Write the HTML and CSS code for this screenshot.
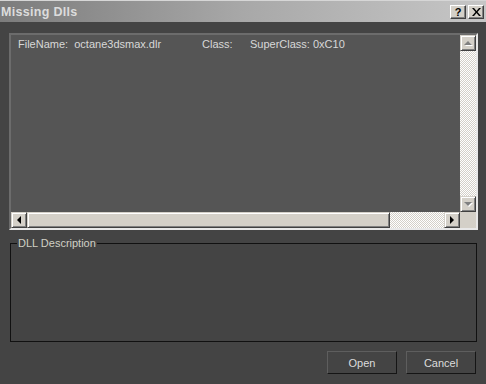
FILE: index.html
```html
<!DOCTYPE html>
<html>

<head>
    <meta charset="UTF-8">
    <title>Missing Dlls</title>
    <link rel="stylesheet" href="styles.css">
</head>

<body>
    <div class="dialog">
        <div class="titlebar">
            <span class="title">Missing Dlls</span>
            <div class="title-buttons">
                <button class="tbtn">?</button>
                <button class="tbtn close">
                    <svg width="9" height="8" viewBox="0 0 9 8">
                        <path d="M0 0h2l2.5 3 2.5-3h2l-3.5 4 3.5 4h-2l-2.5-3-2.5 3h-2l3.5-4z" fill="#000"/>
                    </svg>
                </button>
            </div>
        </div>

        <div class="content">
            <div class="listbox">
                <div class="list-items">
                    <div class="list-row">
                        <span class="col-file">FileName:&nbsp; octane3dsmax.dlr</span>
                        <span class="col-class">Class:</span>
                        <span class="col-super">SuperClass: 0xC10</span>
                    </div>
                </div>
                <div class="vscroll">
                    <div class="sbtn"><span class="arrow up"></span></div>
                    <div class="track"></div>
                    <div class="sbtn"><span class="arrow down"></span></div>
                </div>
                <div class="hscroll">
                    <div class="sbtn"><span class="arrow left"></span></div>
                    <div class="thumb"></div>
                    <div class="track"></div>
                    <div class="sbtn"><span class="arrow right"></span></div>
                </div>
                <div class="corner"></div>
            </div>

            <fieldset class="group">
                <legend>DLL Description</legend>
            </fieldset>

            <div class="button-row">
                <button class="btn">Open</button>
                <button class="btn">Cancel</button>
            </div>
        </div>
    </div>
</body>

</html>
```

FILE: styles.css
```css
body {
    margin: 0;
    padding: 0;
    background-color: #444444;
    font-family: "Liberation Sans", "DejaVu Sans", sans-serif;
    font-size: 11px;
}

.dialog {
    width: 486px;
    height: 384px;
    display: flex;
    flex-direction: column;
    background-color: #444444;
}

.titlebar {
    height: 22px;
    flex: none;
    display: flex;
    align-items: center;
    justify-content: space-between;
    background: linear-gradient(to right, #7c7c7c, #a8a8a8 50%, #c6c6c6);
    border-top: 1px solid #d6d6d6;
    box-sizing: border-box;
}

.title {
    font-family: "Liberation Sans", sans-serif;
    font-weight: bold;
    font-size: 12.5px;
    color: #dcdcdc;
    padding-left: 1px;
    letter-spacing: 0.3px;
}

.title-buttons {
    display: flex;
    gap: 2px;
    padding-right: 2px;
}

.tbtn {
    width: 16px;
    height: 14px;
    padding: 0;
    margin: 0;
    background-color: #d4d0c8;
    border: 1px solid;
    border-color: #ffffff #404040 #404040 #ffffff;
    box-shadow: inset -1px -1px 0 #808080;
    font-family: "Liberation Sans", sans-serif;
    font-weight: bold;
    font-size: 11px;
    line-height: 12px;
    color: #000;
    display: flex;
    align-items: center;
    justify-content: center;
}

.content {
    flex: 1;
    display: flex;
    flex-direction: column;
    padding: 11px 8px 0 9px;
}

.listbox {
    height: 197px;
    box-sizing: border-box;
    border: 2px solid;
    border-color: #6c6c6c #e8e8e8 #e8e8e8 #6c6c6c;
    background-color: #555555;
    display: grid;
    grid-template-columns: 1fr 16px;
    grid-template-rows: 1fr 16px;
}

.list-items {
    padding: 3px 0 0 7px;
    color: #d8d8d8;
}

.list-row {
    display: flex;
    white-space: nowrap;
}

.col-file {
    width: 184px;
}

.col-class {
    width: 48px;
}

.sbtn {
    width: 16px;
    height: 16px;
    box-sizing: border-box;
    background-color: #d4d0c8;
    border: 1px solid;
    border-color: #d4d0c8 #404040 #404040 #d4d0c8;
    box-shadow: inset 1px 1px 0 #ffffff, inset -1px -1px 0 #808080;
    display: flex;
    align-items: center;
    justify-content: center;
    flex: none;
}

.arrow {
    width: 0;
    height: 0;
    border: 4px solid transparent;
}

.arrow.up {
    border-top: 0;
    border-bottom-color: #808080;
    filter: drop-shadow(1px 1px 0 #ffffff);
}

.arrow.down {
    border-bottom: 0;
    border-top-color: #808080;
    filter: drop-shadow(1px 1px 0 #ffffff);
}

.arrow.left {
    border-left: 0;
    border-right-color: #000;
}

.arrow.right {
    border-right: 0;
    border-left-color: #000;
}

.track {
    flex: 1;
    background-color: #d4d0c8;
    background-image: repeating-conic-gradient(#ffffff 0 25%, #d4d0c8 0 50%);
    background-size: 2px 2px;
}

.vscroll {
    display: flex;
    flex-direction: column;
}

.hscroll {
    display: flex;
}

.thumb {
    width: 363px;
    box-sizing: border-box;
    background-color: #d4d0c8;
    border: 1px solid;
    border-color: #d4d0c8 #404040 #404040 #d4d0c8;
    box-shadow: inset 1px 1px 0 #ffffff, inset -1px -1px 0 #808080;
}

.corner {
    background-color: #d4d0c8;
}

.group {
    margin: 6px 1px 0 1px;
    padding: 0;
    height: 106px;
    box-sizing: border-box;
    border: 1px solid #111111;
    min-inline-size: 0;
}

.group legend {
    margin-left: 6px;
    padding: 0 1px;
    color: #d0d0c4;
    font-size: 11px;
    line-height: 15px;
}

.button-row {
    display: flex;
    justify-content: flex-end;
    gap: 9px;
    margin-top: 9px;
    padding-right: 2px;
}

.btn {
    width: 70px;
    height: 23px;
    margin: 0;
    padding: 0;
    background-color: #444444;
    border: 1px solid;
    border-color: #5e5e5e #151515 #151515 #5e5e5e;
    color: #dcdcdc;
    font-family: "Liberation Sans", "DejaVu Sans", sans-serif;
    font-size: 11px;
}
```
